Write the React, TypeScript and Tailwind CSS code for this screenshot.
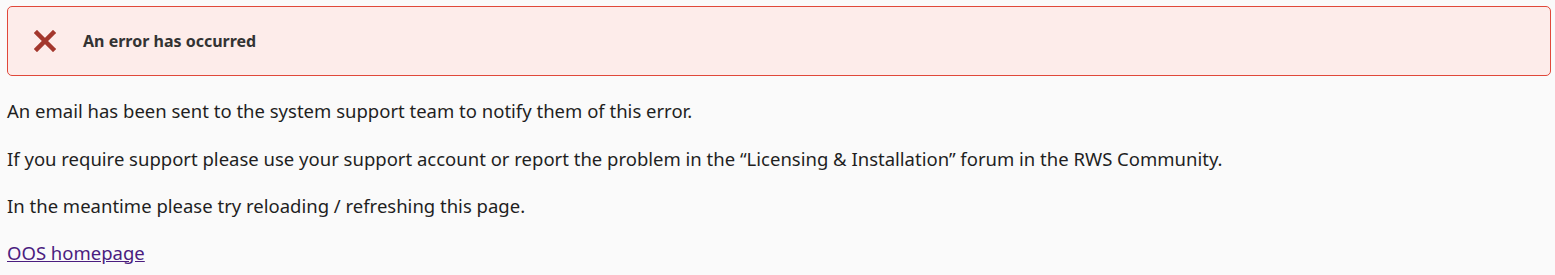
import React from 'react';

export default function App() {
  return (
    <div className="min-h-[275px] bg-[#fafafa] pl-[7px] pr-[4px] pt-[6px] text-[#1f1f1f] font-['Noto_Sans',sans-serif] text-[18.5px]">
      {/* Error banner */}
      <div className="flex h-[70px] items-center rounded-[5px] border border-[#e0483a] bg-[#fdecea]">
        <svg className="ml-[26px] h-[22px] w-[22px]" viewBox="0 0 22 22" aria-hidden="true">
          <path d="M3 3L19 19M19 3L3 19" stroke="#a3372d" strokeWidth="4.5" strokeLinecap="square" fill="none" />
        </svg>
        <span className="ml-[27px] text-[16px] font-bold text-[#333]">An error has occurred</span>
      </div>

      <div className="mt-[23px] leading-[24px]">
        <p>An email has been sent to the system support team to notify them of this error.</p>
        <p className="mt-[23.5px]">
          If you require support please use your support account or report the problem in the “Licensing &amp; Installation” forum in the RWS Community.
        </p>
        <p className="mt-[23.5px]">In the meantime please try reloading / refreshing this page.</p>
        <p className="mt-[22.5px]">
          <a href="#" className="text-[#4b1d80] underline">OOS homepage</a>
        </p>
      </div>
    </div>
  );
}
